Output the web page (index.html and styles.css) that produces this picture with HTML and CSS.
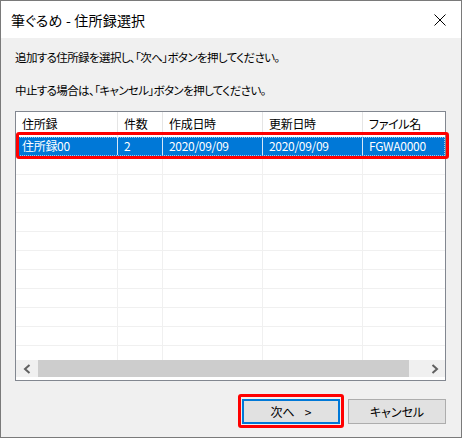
FILE: index.html
```html
<!DOCTYPE html>
<html lang="ja">
<head>
<meta charset="utf-8">
<title>筆ぐるめ - 住所録選択</title>
<link rel="stylesheet" href="styles.css">
</head>
<body>
<div class="window">
  <div class="titlebar">
    <span class="title">筆ぐるめ - 住所録選択</span>
    <div class="close">
      <svg width="12" height="12" viewBox="0 0 12 12"><path d="M0.5 0.5 L11.5 11.5 M11.5 0.5 L0.5 11.5" stroke="#000" stroke-width="1" fill="none"/></svg>
    </div>
  </div>
  <div class="content">
    <p class="msg">追加する住所録を選択し、「次へ」ボタンを押してください。</p>
    <p class="msg msg2">中止する場合は、「キャンセル」ボタンを押してください。</p>
    <div class="listwrap">
      <div class="list">
        <div class="row head">
          <div class="cell">住所録</div><div class="cell">件数</div><div class="cell">作成日時</div><div class="cell">更新日時</div><div class="cell">ファイル名</div>
        </div>
        <div class="rows">
          <div class="row sel">
            <div class="cell">住所録00</div><div class="cell">2</div><div class="cell">2020/09/09</div><div class="cell">2020/09/09</div><div class="cell">FGWA0000</div>
          </div>
          <div class="row"><div class="cell"></div><div class="cell"></div><div class="cell"></div><div class="cell"></div><div class="cell"></div></div>
          <div class="row"><div class="cell"></div><div class="cell"></div><div class="cell"></div><div class="cell"></div><div class="cell"></div></div>
          <div class="row"><div class="cell"></div><div class="cell"></div><div class="cell"></div><div class="cell"></div><div class="cell"></div></div>
          <div class="row"><div class="cell"></div><div class="cell"></div><div class="cell"></div><div class="cell"></div><div class="cell"></div></div>
          <div class="row"><div class="cell"></div><div class="cell"></div><div class="cell"></div><div class="cell"></div><div class="cell"></div></div>
          <div class="row"><div class="cell"></div><div class="cell"></div><div class="cell"></div><div class="cell"></div><div class="cell"></div></div>
          <div class="row"><div class="cell"></div><div class="cell"></div><div class="cell"></div><div class="cell"></div><div class="cell"></div></div>
          <div class="row"><div class="cell"></div><div class="cell"></div><div class="cell"></div><div class="cell"></div><div class="cell"></div></div>
          <div class="row"><div class="cell"></div><div class="cell"></div><div class="cell"></div><div class="cell"></div><div class="cell"></div></div>
          <div class="row"><div class="cell"></div><div class="cell"></div><div class="cell"></div><div class="cell"></div><div class="cell"></div></div>
          <div class="row"><div class="cell"></div><div class="cell"></div><div class="cell"></div><div class="cell"></div><div class="cell"></div></div>
        </div>
        <div class="hscroll">
          <div class="sbtn">
            <svg width="8" height="10" viewBox="0 0 8 10"><polyline points="6.5,1 2,5 6.5,9" fill="none" stroke="#606060" stroke-width="2"/></svg>
          </div>
          <div class="thumb"></div>
          <div class="track"></div>
          <div class="sbtn">
            <svg width="8" height="10" viewBox="0 0 8 10"><polyline points="1.5,1 6,5 1.5,9" fill="none" stroke="#606060" stroke-width="2"/></svg>
          </div>
        </div>
      </div>
      <div class="mark mark-row"></div>
    </div>
    <div class="buttons">
      <div class="btn-wrap">
        <button class="btn btn-default">次へ<span class="gt">&gt;</span></button>
        <div class="mark mark-btn"></div>
      </div>
      <button class="btn">キャンセル</button>
    </div>
  </div>
</div>
</body>
</html>
```

FILE: styles.css
```css
html, body {
  margin: 0;
  padding: 0;
  background: #ffffff;
}

body {
  font-family: "Noto Sans CJK JP", "Noto Sans", sans-serif;
  font-feature-settings: "palt";
  color: #000;
}

.window {
  width: 462px;
  height: 438px;
  box-sizing: border-box;
  border: 1px solid #7a7a7a;
  background: #f0f0f0;
  display: flex;
  flex-direction: column;
}

.titlebar {
  height: 37px;
  background: #ffffff;
  display: flex;
  align-items: center;
  justify-content: space-between;
  padding-left: 10px;
  flex: none;
}

.title {
  font-size: 14px;
  letter-spacing: 0.2px;
  line-height: 20px;
}

.close {
  width: 42px;
  height: 37px;
  display: flex;
  align-items: center;
  justify-content: center;
}

.close svg {
  display: block;
}

.content {
  padding: 9px 15px 0 14px;
  display: flex;
  flex-direction: column;
}

.msg {
  margin: 0;
  font-size: 11.5px;
  letter-spacing: -0.6px;
  line-height: 20px;
  white-space: nowrap;
}

.msg2 {
  margin-top: 13px;
}

.listwrap {
  position: relative;
  margin-top: 11px;
  height: 270px;
}

.list {
  height: 270px;
  box-sizing: border-box;
  border: 1px solid #828790;
  background: #ffffff;
  display: flex;
  flex-direction: column;
  overflow: hidden;
}

.row {
  display: grid;
  grid-template-columns: 102px 45px 100px 100px 140px;
  height: 19px;
  box-sizing: border-box;
  border-bottom: 1px solid #f0f0f0;
  font-size: 12px;
  letter-spacing: -0.3px;
  white-space: nowrap;
}

.cell {
  border-right: 1px solid #f0f0f0;
  padding-left: 6px;
  line-height: 18px;
  overflow: hidden;
}

.head {
  height: 25px;
  border-bottom: none;
  flex: none;
}

.head .cell {
  border-right-color: #e5e5e5;
  line-height: 24px;
}

.rows {
  flex: 1;
  overflow: hidden;
}

.sel {
  background: #0078d7;
  color: #ffffff;
  border-bottom-color: #0078d7;
  outline: 1px dotted #9cc8f0;
  outline-offset: -1px;
}

.sel .cell {
  border-right-color: #d8e8f8;
}

.hscroll {
  height: 17px;
  margin-bottom: 3px;
  flex: none;
  display: flex;
  background: #f0f0f0;
}

.sbtn {
  width: 21px;
  flex: none;
  display: flex;
  align-items: center;
  justify-content: center;
}

.sbtn:first-child {
  width: 22px;
}

.sbtn svg {
  display: block;
}

.thumb {
  width: 371px;
  flex: none;
  background: #cdcdcd;
}

.track {
  flex: 1;
}

.mark {
  position: absolute;
  box-sizing: border-box;
  border: 3px solid #ff0000;
  border-radius: 3px;
  pointer-events: none;
}

.mark-row {
  left: 1px;
  top: 21px;
  width: 433px;
  height: 27px;
}

.buttons {
  margin-top: 18px;
  display: flex;
  justify-content: flex-end;
  gap: 8px;
}

.btn-wrap {
  position: relative;
  display: flex;
}

.btn {
  width: 98px;
  height: 25px;
  box-sizing: border-box;
  border: 1px solid #adadad;
  background: #e1e1e1;
  font-family: "Noto Sans CJK JP", "Noto Sans", sans-serif;
  font-feature-settings: "palt";
  font-size: 12px;
  line-height: 20px;
  color: #000;
  padding: 0;
  margin: 0;
}

.btn-default {
  border: 2px solid #0078d7;
}

.gt {
  margin-left: 10px;
}

.mark-btn {
  left: -4px;
  top: -5px;
  right: -4px;
  bottom: -4px;
}
```
